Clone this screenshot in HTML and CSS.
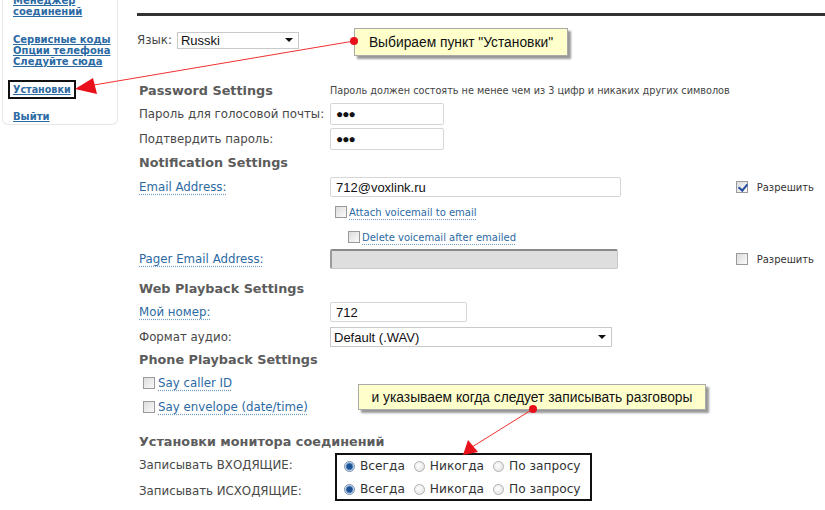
FILE: index.html
```html
<!DOCTYPE html>
<html>
<head>
<meta charset="utf-8">
<link rel="stylesheet" href="styles.css">
</head>
<body>
<div class="page">
  <aside class="sidebar">
    <a class="nav" href="#">Менеджер<br>соединений</a>
    <div class="navgroup">
      <a class="nav" href="#">Сервисные коды</a>
      <a class="nav" href="#">Опции телефона</a>
      <a class="nav" href="#">Следуйте сюда</a>
    </div>
    <a class="nav boxed" href="#">Установки</a>
    <a class="nav logout" href="#">Выйти</a>
  </aside>

  <main class="main">
    <div class="rule"></div>
    <div class="langrow">
      <span class="lbl">Язык:</span>
      <div class="select lang"><span>Russki</span><i class="caret"></i></div>
    </div>

    <div class="row first">
      <span class="head">Password Settings</span>
      <span class="note">Пароль должен состоять не менее чем из 3 цифр и никаких других символов</span>
    </div>
    <div class="row">
      <span class="lbl">Пароль для голосовой почты:</span>
      <div class="input short"><span class="dots">●●●</span></div>
    </div>
    <div class="row m1">
      <span class="lbl">Подтвердить пароль:</span>
      <div class="input short"><span class="dots">●●●</span></div>
    </div>
    <div class="row mn1">
      <span class="head">Notification Settings</span>
    </div>
    <div class="row m1">
      <a class="lbl link" href="#">Email Address:</a>
      <div class="input wide"><span>712@voxlink.ru</span></div>
      <span class="allow"><i class="cb checked"></i>Разрешить</span>
    </div>
    <div class="row m1">
      <span class="lbl"></span>
      <span class="sub"><i class="cb"></i><a class="link small" href="#">Attach voicemail to email</a></span>
    </div>
    <div class="row m1">
      <span class="lbl"></span>
      <span class="sub indent"><i class="cb"></i><a class="link small" href="#">Delete voicemail after emailed</a></span>
    </div>
    <div class="row mn2">
      <a class="lbl link" href="#">Pager Email Address:</a>
      <div class="input wide disabled"></div>
      <span class="allow"><i class="cb"></i>Разрешить</span>
    </div>
    <div class="row m5">
      <span class="head">Web Playback Settings</span>
    </div>
    <div class="row">
      <a class="lbl link" href="#">Мой номер:</a>
      <div class="input mid"><span>712</span></div>
    </div>
    <div class="row m1">
      <span class="lbl">Формат аудио:</span>
      <div class="select fmt"><span>Default (.WAV)</span><i class="caret"></i></div>
    </div>
    <div class="row mn2">
      <span class="head">Phone Playback Settings</span>
    </div>
    <div class="row opt">
      <i class="cb"></i><a class="link" href="#">Say caller ID</a>
    </div>
    <div class="row opt">
      <i class="cb"></i><a class="link" href="#">Say envelope (date/time)</a>
    </div>

    <div class="monitor">
      <div class="row">
        <span class="head">Установки монитора соединений</span>
      </div>
      <div class="mongrid">
        <div class="monlabels">
          <div class="row"><span class="lbl">Записывать ВХОДЯЩИЕ:</span></div>
          <div class="row m2"><span class="lbl">Записывать ИСХОДЯЩИЕ:</span></div>
        </div>
        <div class="radiobox">
          <div class="radios">
            <span class="r"><i class="rd on"></i>Всегда</span>
            <span class="r"><i class="rd"></i>Никогда</span>
            <span class="r"><i class="rd"></i>По запросу</span>
          </div>
          <div class="radios">
            <span class="r"><i class="rd on"></i>Всегда</span>
            <span class="r"><i class="rd"></i>Никогда</span>
            <span class="r"><i class="rd"></i>По запросу</span>
          </div>
        </div>
      </div>
    </div>
  </main>
</div>

<div class="callout c1">Выбираем пункт "Установки"</div>
<div class="callout c2">и указываем когда следует записывать разговоры</div>

<svg class="arrows" width="825" height="510" viewBox="0 0 825 510">
  <line x1="354" y1="41" x2="88" y2="86" stroke="#f03030" stroke-width="1"/>
  <polygon points="75,89 93,78 97,94" fill="#e8101a"/>
  <circle cx="354" cy="41" r="4" fill="#e8101a"/>
  <line x1="533" y1="409" x2="472" y2="447" stroke="#f03030" stroke-width="1"/>
  <polygon points="463,455 468,440 478,452" fill="#e8101a"/>
  <circle cx="533" cy="409" r="4" fill="#e8101a"/>
</svg>
</body>
</html>
```

FILE: styles.css
```css
* { box-sizing: border-box; }
html, body { margin: 0; padding: 0; background: #fff; }
body {
  width: 825px;
  height: 510px;
  overflow: hidden;
  position: relative;
  font-family: "DejaVu Sans", Verdana, sans-serif;
  font-size: 11.8px;
  color: #484848;
}
.page { display: flex; align-items: flex-start; }

.sidebar {
  width: 116px;
  margin: -5px 0 0 2px;
  padding: 0 0 8px 10px;
  border: 1px solid #e6e6e6;
  border-top: none;
  border-radius: 0 0 6px 6px;
  display: flex;
  flex-direction: column;
  align-items: flex-start;
  height: 130px;
}
.nav {
  font-size: 10px;
  font-weight: bold;
  line-height: 11px;
  color: #2c6aa3;
  text-decoration: underline;
}
.navgroup { display: flex; flex-direction: column; margin-top: 17px; }
.boxed {
  margin: 13px 0 0 -5px;
  padding: 2px 3px 2px 3px;
  border: 2px solid #111;
  line-height: 11px;
  font-size: 9.6px;
}
.logout { margin-top: 12px; }

.main { margin-left: 19px; flex: 1; }
.rule { height: 3px; background: #333; margin-top: 13px; }
.langrow { display: flex; align-items: center; height: 24px; margin-top: 12px; }
.langrow .lbl { width: auto; margin-right: 5px; }

.row { display: flex; align-items: center; padding-left: 2px; height: 24px; }
.first { margin-top: 26px; }
.m1 { margin-top: 1px; }
.m2 { margin-top: 2px; }
.m5 { margin-top: 5px; }
.mn1 { margin-top: -1px; }
.mn2 { margin-top: -2px; }

.lbl { width: 191px; flex: none; white-space: nowrap; }
.head { font-weight: bold; color: #5c5c5c; font-size: 12.8px; width: 191px; flex: none; white-space: nowrap; }
.note { font-size: 9.7px; color: #444; white-space: nowrap; }
.link { color: #2c6aa3; text-decoration: underline dotted #6f9cc4; text-underline-offset: 3px; }
.small { font-size: 10px; }

.input {
  height: 22px;
  border: 1px solid #d6d6d6;
  border-radius: 2px;
  display: flex;
  align-items: center;
  padding-left: 5px;
  font-family: "Liberation Sans", Arial, sans-serif;
  font-size: 13px;
  color: #111;
}
.short { width: 114px; }
.wide { width: 291px; height: 20px; }
.mid { width: 137px; height: 20px; }
.dots { font-size: 12px; letter-spacing: -1px; }
.disabled { background: #dedede; border: 1px solid #c8c8c8; border-top: 2px solid #8a8a8a; border-left: 2px solid #9a9a9a; width: 288px; }

.select {
  height: 17px;
  border: 1px solid #c9c9c9;
  display: flex;
  align-items: center;
  justify-content: space-between;
  padding: 0 5px 0 3px;
  font-family: "Liberation Sans", Arial, sans-serif;
  font-size: 13px;
  color: #111;
}
.lang { width: 122px; }
.fmt { width: 282px; height: 20px; }
.caret {
  width: 0; height: 0;
  border-left: 4px solid transparent;
  border-right: 4px solid transparent;
  border-top: 4px solid #111;
}

.allow { margin-left: auto; margin-right: 11px; font-size: 10px; display: flex; align-items: center; color: #333; }
.allow .cb { margin-right: 9px; }

.cb {
  width: 12px; height: 12px;
  border: 1px solid #9a9a9a;
  background: linear-gradient(135deg, #dcdcdc, #fafafa);
  display: inline-block;
  flex: none;
  position: relative;
}
.cb.checked::after {
  content: "";
  position: absolute;
  left: 3px; top: 0px;
  width: 4px; height: 7px;
  border-right: 2px solid #2a4fa0;
  border-bottom: 2px solid #2a4fa0;
  transform: rotate(40deg);
}
.sub { display: flex; align-items: center; margin-left: 5px; }
.sub .cb { margin-right: 2px; }
.sub.indent { margin-left: 18px; }
.opt { padding-left: 6px; }
.opt .cb { margin-right: 3px; }

.monitor { margin-top: 10px; }
.mongrid { display: flex; align-items: flex-start; }
.monlabels { width: 198px; flex: none; }
.radiobox {
  border: 2px solid #111;
  width: 257px;
  height: 48px;
  padding: 1px 0 0 7px;
  display: flex;
  flex-direction: column;
}
.radios { display: flex; height: 22px; align-items: center; }
.radios + .radios { margin-top: 3px; }
.r { display: flex; align-items: center; margin-right: 9px; color: #333; font-size: 12.2px; }
.rd {
  width: 11px; height: 11px; border-radius: 50%;
  border: 1px solid #b0b0b0;
  background: radial-gradient(circle at 40% 40%, #fff, #ddd);
  margin-right: 5px;
  display: inline-block;
}
.rd.on { background: radial-gradient(circle, #1d4f93 0 2.5px, #6f9fd0 3.5px, #e8eef7 4.5px); border-color: #7a8ea8; }

.callout {
  position: absolute;
  background: #ffffcc;
  border: 1px solid #aaa;
  box-shadow: 3px 3px 2px #999;
  font-family: "Liberation Sans", Arial, sans-serif;
  font-size: 13.8px;
  color: #111;
  display: flex;
  align-items: center;
  justify-content: center;
}
.c1 { left: 354px; top: 28px; width: 214px; height: 28px; }
.c2 { left: 358px; top: 384px; width: 348px; height: 26px; }
.arrows { position: absolute; left: 0; top: 0; pointer-events: none; }
```
